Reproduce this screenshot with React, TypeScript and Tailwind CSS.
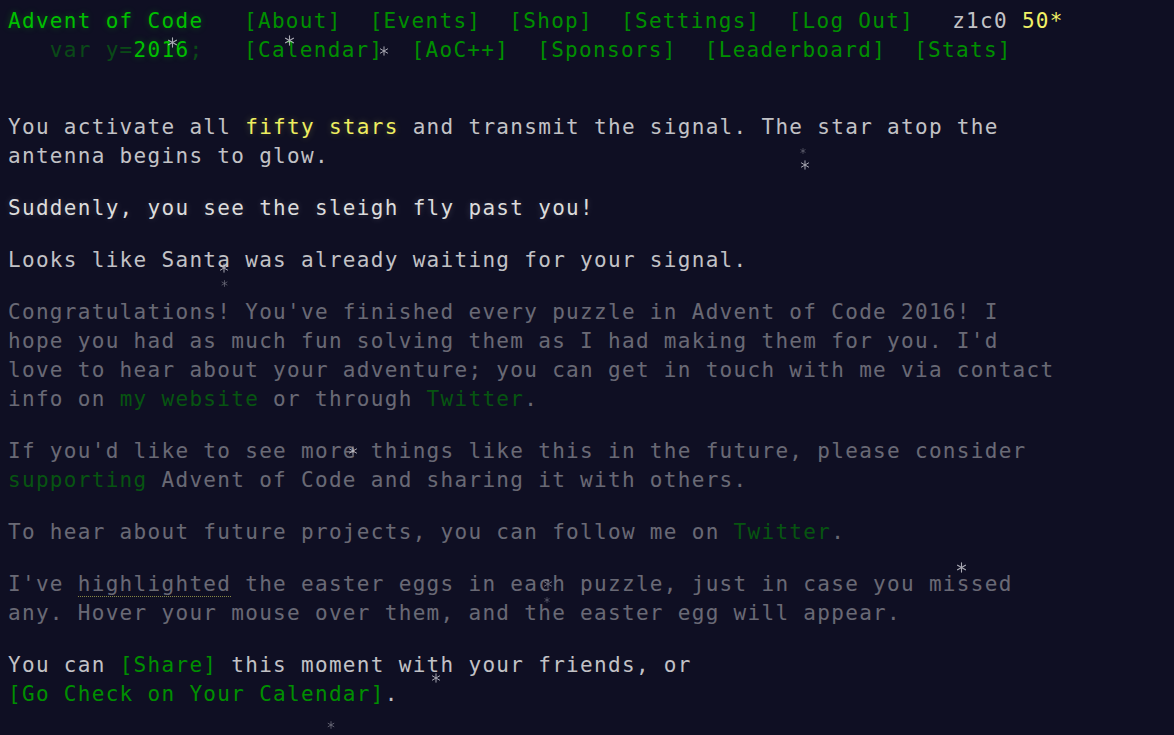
import React from "react";

const glowGreen = "[text-shadow:0_0_7px_#00cc0055]";

function Star({ x, y, size = 11, dim = false }: { x: number; y: number; size?: number; dim?: boolean }) {
  return (
    <svg
      className={`absolute pointer-events-none ${dim ? "opacity-50" : "opacity-80"}`}
      style={{ left: x - size / 2, top: y - size / 2 }}
      width={size}
      height={size}
      viewBox="0 0 10 10"
    >
      <g stroke="#d0d0d8" strokeWidth="1" strokeLinecap="round">
        <line x1="5" y1="0.8" x2="5" y2="9.2" />
        <line x1="1.4" y1="2.9" x2="8.6" y2="7.1" />
        <line x1="1.4" y1="7.1" x2="8.6" y2="2.9" />
      </g>
    </svg>
  );
}

const topNav = ["[About]", "[Events]", "[Shop]", "[Settings]", "[Log Out]"];
const eventNav = ["[Calendar]", "[AoC++]", "[Sponsors]", "[Leaderboard]", "[Stats]"];

export default function App() {
  return (
    <div className="relative min-h-screen overflow-hidden bg-[#0f0f23] text-[#c2c2c6] font-['DejaVu_Sans_Mono',monospace] text-[21px] tracking-[1.31px] leading-[29px]">
      <header className="pl-[8px] pt-[7px] whitespace-pre">
        <div className="flex items-baseline">
          <h1 className={`w-[236px] shrink-0 text-[#00c000] ${glowGreen}`}>Advent of Code</h1>
          <nav className="flex gap-[28px] text-[#008f00]">
            {topNav.map((n) => (
              <a key={n}>{n}</a>
            ))}
          </nav>
          <div className="ml-[38px]">
            z1c0 <span className="text-[#f2f266]">50*</span>
          </div>
        </div>
        <div className="flex items-baseline">
          <h1 className="w-[236px] shrink-0 text-[#00c000]">
            {"   "}
            <span className="opacity-[0.33]">var y=</span>
            <span className={glowGreen}>2016</span>
            <span className="opacity-[0.33]">;</span>
          </h1>
          <nav className="flex gap-[28px] text-[#008f00]">
            {eventNav.map((n) => (
              <a key={n}>{n}</a>
            ))}
          </nav>
        </div>
      </header>

      <main className="pl-[8px] mt-[48px] whitespace-nowrap">
        <p className="mb-[23px]">
          You activate all{" "}
          <span className="text-[#eeee60] [text-shadow:0_0_7px_#ffff6640]">fifty stars</span> and transmit the
          signal. The star atop the
          <br />
          antenna begins to glow.
        </p>
        <p className="mb-[23px]">
          <em className="not-italic text-[#dcdcdc] [text-shadow:0_0_7px_#ffffff30]">
            Suddenly, you see the sleigh fly past you!
          </em>
        </p>
        <p className="mb-[23px]">Looks like Santa was already waiting for your signal.</p>
        <p className="mb-[23px] opacity-50">
          Congratulations! You've finished every puzzle in Advent of Code 2016! I
          <br />
          hope you had as much fun solving them as I had making them for you. I'd
          <br />
          love to hear about your adventure; you can get in touch with me via contact
          <br />
          info on <a className="text-[#009900]">my website</a> or through{" "}
          <a className="text-[#009900]">Twitter</a>.
        </p>
        <p className="mb-[23px] opacity-50">
          If you'd like to see more things like this in the future, please consider
          <br />
          <a className="text-[#009900]">supporting</a> Advent of Code and sharing it with others.
        </p>
        <p className="mb-[23px] opacity-50">
          To hear about future projects, you can follow me on <a className="text-[#009900]">Twitter</a>.
        </p>
        <p className="mb-[23px] opacity-50">
          I've <span className="border-b border-dotted border-[#ffff66]">highlighted</span> the easter eggs in
          each puzzle, just in case you missed
          <br />
          any. Hover your mouse over them, and the easter egg will appear.
        </p>
        <p className="mb-[23px]">
          You can <a className="text-[#008f00]">[Share]</a> this moment with your friends, or
          <br />
          <a className="text-[#008f00]">[Go Check on Your Calendar]</a>.
        </p>
      </main>

      <Star x={172} y={42} />
      <Star x={289} y={40} />
      <Star x={384} y={51} size={10} />
      <Star x={805} y={165} size={10} />
      <Star x={803} y={151} size={6} dim />
      <Star x={224} y={268} size={10} />
      <Star x={224} y={283} size={7} dim />
      <Star x={353} y={451} size={10} />
      <Star x={548} y={584} size={10} dim />
      <Star x={547} y={600} size={6} dim />
      <Star x={961} y={567} size={11} />
      <Star x={436} y={678} size={10} />
      <Star x={331} y={725} size={8} dim />
    </div>
  );
}
